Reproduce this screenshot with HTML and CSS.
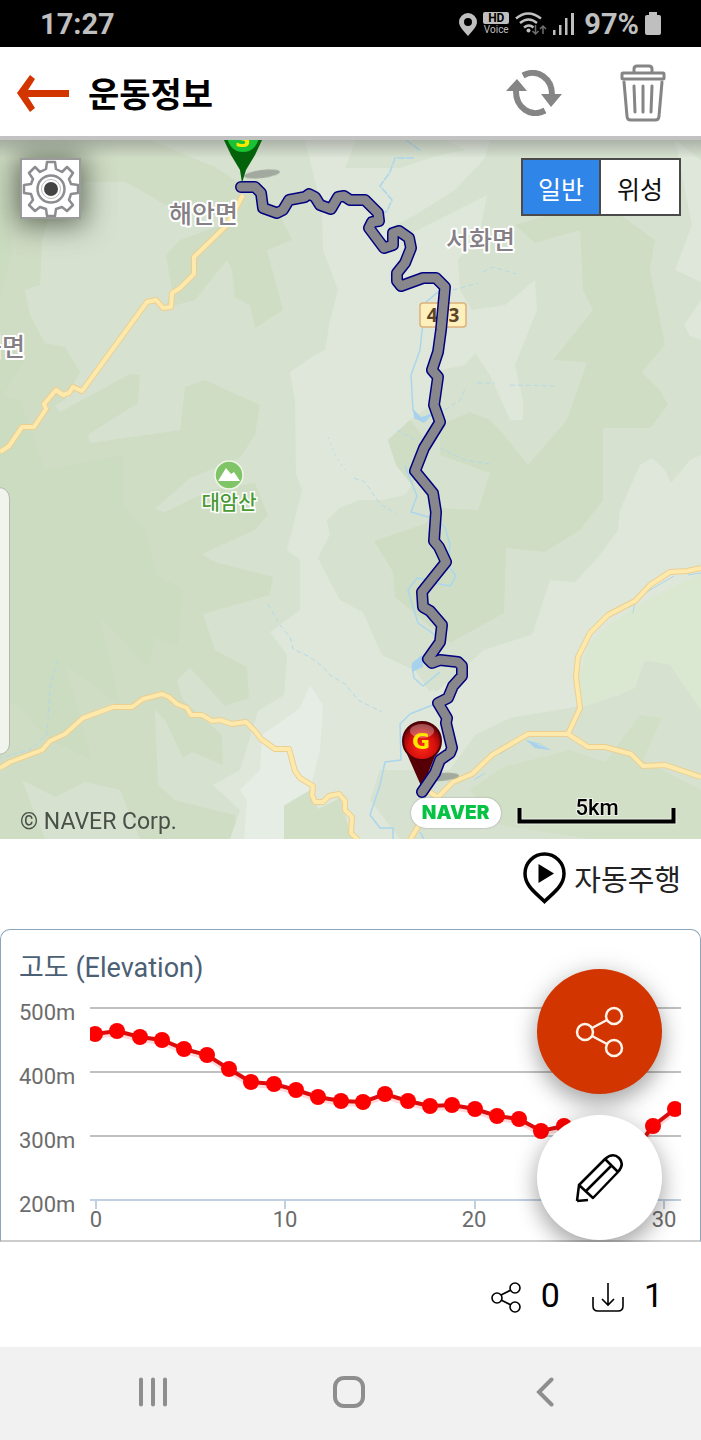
FILE: index.html
```html
<!DOCTYPE html>
<html lang="ko">
<head>
<meta charset="utf-8">
<meta name="viewport" content="width=device-width, initial-scale=1">
<title>운동정보</title>
<link rel="stylesheet" href="styles.css">
</head>
<body>
<div class="status-bar">
  <span class="status-time">17:27</span>
  <div class="status-icons">
    <svg width="18" height="24" viewBox="0 0 18 24"><path fill="#bfbfbf" fill-rule="evenodd" d="M9 1a9 9 0 0 0-9 9c0 5 5 9 9 14 4-5 9-9 9-14a9 9 0 0 0-9-9zm0 5a4 4 0 1 1 0 8 4 4 0 0 1 0-8z"/></svg>
    <span class="hd-voice"><b class="hd">HD</b><span class="voice">Voice</span></span>
    <svg width="32" height="24" viewBox="0 0 32 24" fill="none"><g stroke="#bfbfbf" stroke-width="2.4"><path d="M1 6.500q12-10 25 0M5 11q8.500-7 17 0M9 15.500q5-4 9.500 0"/></g><circle cx="13.500" cy="18.500" r="2" fill="#bfbfbf"/><path d="M20.500 13v9m-3-3 3 3 3-3M28 22v-8m-3 3 3-3 3 3" stroke="#6d6d6d" stroke-width="1.500"/></svg>
    <svg class="signal" width="21" height="22" viewBox="0 0 21 22" fill="#bfbfbf"><path d="M0 17h2.500v5H0zM6 12h2.500v10H6zM12 5h2.500v17H12zM18 0h3v22h-3z"/></svg>
    <span class="status-battery">97%</span>
    <svg width="16" height="23" viewBox="0 0 16 23"><path fill="#bfbfbf" d="M4 0h8v3h2q2 0 2 2v16q0 2-2 2H2q-2 0-2-2V5q0-2 2-2h2z"/></svg>
  </div>
</div>

<header class="app-bar">
  <button class="icon-button" type="button" aria-label="뒤로"><svg width="52" height="38" viewBox="0 0 52 38"><path fill="#d23500" d="M0 19 13 1l5 4-7 11h41v7H11l7 11-5 4z"/></svg></button>
  <h1 class="app-title">운동정보</h1>
  <button class="icon-button refresh" type="button" aria-label="새로고침"><svg width="56" height="46" viewBox="0 0 56 46"><g fill="none" stroke="#858585" stroke-width="6"><path d="M17 5.500C31-2 47 8 46 27"/><path d="M39 40.500C25 48 9 38 10 19"/></g><path fill="#858585" d="M35 24h21L45 37zM0 21h21L11 9z"/></svg></button>
  <button class="icon-button" type="button" aria-label="삭제"><svg width="46" height="58" viewBox="0 0 46 58" fill="none" stroke="#858585" stroke-width="3"><path d="M14 8V5q0-3 3-3h12q3 0 3 3v3"/><rect x="2" y="9" width="42" height="6" rx="1"/><path d="M4 18l3 34q0 4 4 4h24q4 0 4-4l3-34M14 22l1 26M23 22v26M32 22l-1 26" stroke-linecap="round"/></svg></button>
</header>

<main>
<section class="map" aria-label="지도">
  <svg class="map-canvas" viewBox="0 140 701 699">
    <defs>
      <radialGradient id="redPin" cx=".5" cy=".65" r=".65"><stop offset="0" stop-color="#ff2b1c"/><stop offset=".55" stop-color="#d40f0c"/><stop offset="1" stop-color="#560006"/></radialGradient>
      <linearGradient id="topShade" x2="0" y2="1"><stop offset="0" stop-color="#777" stop-opacity=".45"/><stop offset="1" stop-color="#777" stop-opacity="0"/></linearGradient>
      <path id="roadA" d="M0 452 9 446 22 427H34L46 409 44 404 56 390 63 395 69 393 73 387 82 391 147 302 156 300 163 308 171 307 172 293 180 288 194 274V257L227 225 243 195"/>
      <path id="roadB" d="M0 768 10 762 42 750 50 741 65 734 83 718 113 707H132L143 699 162 694 169 697 177 704 187 708 191 715H202L212 721 220 720 232 724 246 722 255 731 261 739 275 749H289L295 771 300 778 313 786 312 795 315 802H323L329 796 339 794 345 801V810L352 817 351 833 358 840"/>
      <path id="roadC" d="M410 840 420 823 438 797 453 782 472 774 492 755 528 734H568L588 747H605L631 754 643 766 665 765 701 777M568 734 580 708 576 677 578 657 590 633 608 615 635 601 650 585 670 572 687 571 701 568M422 787 440 799"/>
      <path id="track" d="M241 187H255L261 193 263 208 277 213 283 210 289 200 305 197 309 194 315 197 320 205 331 209 338 197 344 196 350 200H365L378 213 379 221 372 222 369 228 384 248 393 245V233L399 231 409 238 411 248 405 263 397 273V281L401 286 423 278H436L445 287 441 330 438 352 432 370 438 377 434 405 440 422 424 448 415 471 433 493 436 512 434 541 439 547 446 562 422 592 423 607 430 611 442 625 440 642 428 659 432 663 440 660 458 662 462 666V676L453 686 448 698 438 703 447 718 446 723 452 748 450 753 440 760 435 773 422 792"/>
    </defs>
    <rect y="140" width="701" height="699" fill="#d6e2cf"/>
    <!-- terrain -->
    <path fill="#d0ddc5" d="M0 140H150L215 167 235 180 280 215 292 240 267 250 283 310 255 328 250 305 235 298 232 270 227 260 195 300 165 308 172 290 166 255 180 240 235 220 165 205 140 190 125 182H85L50 215 42 240 40 285 25 290 30 315 45 343 65 347 80 372 65 400 55 406 60 412 130 374 140 375 138 403 88 435 90 443 180 430 185 387 205 380 260 405 255 435 240 458 190 478 155 509 165 512 210 490 255 483 268 515 255 530 202 554 215 562 273 577 270 595 203 614 215 650 247 667 249 698 225 706 190 668 177 680 183 700 222 735 223 765 192 752 183 758 165 720 155 710 158 785 175 800 235 815 238 839H140L120 790 85 782 55 797 22 780 45 839H0z"/>
    <path fill="#cbdcc1" d="M0 140 12 250 0 300zM0 340 25 360 0 400zM0 395 20 400 45 470 123 455V505L145 530 157 575 183 590 178 645 155 638 148 667 100 617 120 705 65 665 92 760 50 740 15 703 0 710z"/>
    <path fill="#dee7d9" d="M265 140H490L485 158 455 190 415 215 390 228 402 238 487 195 480 232 458 260 460 290 472 310 505 305 535 280 537 310 515 365 523 400V420H510L490 375 475 353 465 365 440 370 438 400 410 420 388 440 396 465 412 485 405 495 360 505 340 508 327 520 330 535 318 558 340 600 363 612 380 650 415 670 430 692 480 650 500 640 532 635 550 580 575 582 600 555 618 530 620 510 640 465 652 458 665 470 671 483 690 460 701 455V839H230L240 810 213 785 240 770 258 711 284 695 287 655 270 632 300 610V560L287 550 302 490 296 475 295 400 290 372 315 355 325 350 330 320 338 290 323 250 322 210 305 140z"/>
    <path fill="#d6e2cf" d="M356 140H445L465 150 440 155 400 168H345z"/>
    <path fill="#d6e2cf" d="M340 508 327 520 330 535 318 558 340 600 363 612 382 655 418 672 436 692 484 650 530 635 547 585 505 560V500H360z"/>
    <path fill="#d0ddc5" d="M515 225 535 243 580 230 583 290 593 310 553 360 587 362 567 420 528 465 500 430 490 420 470 412 440 425V455L490 473 478 510 440 508 424 524 374 541 393 572 395 597 407 607 450 643 504 613 506 548 545 552 580 530 603 500V428L650 428 668 405 660 390 642 372 665 345 650 270 655 240 600 200zM410 420 388 440 396 465 412 485 430 445z"/>
    <path fill="#dee7d9" d="M675 140 701 160V282L675 270 692 225zM701 300 684 325 690 336 701 340z"/>
    <path fill="#d6e2cf" d="M400 839 370 800 380 770 450 770 475 735 510 718 570 708 620 695 640 662 701 650V839z"/>
    <path fill="#dbe8d1" d="M701 573 652 597 608 625 588 645 577 690 578 709 635 688 645 660 670 665 701 710z"/>
    <path fill="#d1dfc6" d="M503 767 570 750 605 762 640 715 662 718 643 760 701 790V839H590L500 825 470 790zM284 839V806L310 790 318 809 340 798 352 839z"/>
    <path fill="#e5ede4" d="M310 685 323 705 320 750 310 790 284 805V839H244L247 800 240 790 260 770 262 735 300 708z"/>
    <!-- water -->
    <g fill="none" stroke="#abd6ec" stroke-width="1.500" stroke-linejoin="round">
      <path d="M406 140 421 151M414 158 395 158 390 172 380 186 392 200 387 211 376 218" stroke-dasharray="8 1"/>
      <path d="M438 292 425 303 420 350 411 375 413 410 421 420 430 414M405 466 417 496 411 512 432 518 445 527 450 545 448 565 456 576 450 586 434 583M429 580 417 578 408 590 414 610 418 623 435 635M429 660 412 666 414 678 423 686 440 672M435 704 410 714 400 724 401 760 385 762 380 785 370 815 380 828 393 828 393 839M420 832 424 839"/>
      <path d="M453 290 478 283M483 272 493 267 516 274M477 383 495 383M510 385 555 386M445 410 460 400 466 387M397 430 415 440M440 448 465 460 490 464M354 478 365 482 380 504 397 514M268 604 280 625 290 637 293 649 310 657 323 667 330 675 345 684 358 700 382 712M58 660 50 686 47 735 30 750 0 758" stroke-width="1" stroke-dasharray="5 3" opacity=".8"/>
      <path d="M527 741 540 744 550 750M474 780 485 773M500 754 510 747M674 576 650 590 635 600 633 613M688 575 701 573" stroke-width="1"/>
      <path d="M328 437 336 457 345 470" stroke-width="1" stroke-dasharray="2 4" opacity=".7"/>
    </g>
    <path fill="#a7d1ec" d="M412 663 422 655 423 667 412 672zM525 739 550 750 535 748zM413 409 421 417 433 414 424 423 414 418z"/>
    <!-- roads -->
    <g fill="none" stroke-linejoin="round">
      <g stroke="#ebcf91" stroke-width="6"><use href="#roadA"/><use href="#roadB"/><use href="#roadC"/></g>
      <g stroke="#fde9ab" stroke-width="4"><use href="#roadA"/><use href="#roadB"/><use href="#roadC"/></g>
    </g>
    <rect y="140" width="701" height="18" fill="url(#topShade)"/>
    <!-- place names -->
    <g class="place">
      <text x="169" y="223">해안면</text>
      <text x="446" y="249">서화면</text>
      <text x="-21" y="356">북면</text>
    </g>
    <g>
      <circle cx="229" cy="475" r="14" fill="#7fc466" stroke="#eef6e8" stroke-width="1.500"/>
      <path fill="#fff" d="M218 481 226 468 231 474 234 472 240 481z"/>
      <text class="peak" x="229" y="510" text-anchor="middle">대암산</text>
    </g>
    <rect x="420" y="303" width="46" height="24" rx="3" fill="#fdf0bd" stroke="#ddb178" stroke-width="1.500"/>
    <text class="road-number" x="443" y="322" text-anchor="middle">453</text>
    <!-- pins and track -->
    <g fill="#555" opacity=".4"><ellipse cx="262" cy="174" rx="18" ry="4" transform="rotate(-7 262 174)"/><ellipse cx="441" cy="777" rx="18" ry="4" transform="rotate(-5 441 777)"/></g>
    <path fill="#560006" d="M407 754 422 788 436 754z"/>
    <circle cx="422" cy="741" r="19" fill="url(#redPin)" stroke="#4d0008" stroke-width="2"/>
    <ellipse cx="422" cy="731" rx="12" ry="7" fill="#fff" opacity=".3"/>
    <text class="pin-letter" x="421" y="749" text-anchor="middle">G</text>
    <g fill="none" stroke-linejoin="round" stroke-linecap="round">
      <use href="#track" stroke="#000080" stroke-width="12"/>
      <use href="#track" stroke="#87878c" stroke-width="9"/>
    </g>
    <path fill="#04630a" d="M223 138 231 155 240 170 242 183 246 170 255 155 263 138z"/>
    <path fill="#1ac035" d="M227 138Q231 152 243 152T259 138z"/>
    <text class="pin-letter" x="243" y="147" text-anchor="middle">S</text>
    <!-- scale -->
    <path d="M519.500 808V821.500H673.500V808" fill="none" stroke="#fff" stroke-width="6" opacity=".5"/>
    <path d="M519.500 808V821.500H673.500V808" fill="none" stroke="#000" stroke-width="4"/>
    <text class="scale-text" x="597" y="815" text-anchor="middle">5km</text>
    <text class="copyright" x="20" y="829">© NAVER Corp.</text>
  </svg>
  <button class="settings" type="button" aria-label="설정"><svg width="58" height="58" viewBox="-29 -29 58 58" fill="none" stroke="#8d8d91" stroke-width="2.500" stroke-linejoin="round"><path d="M-5-20-4-27H4L5-20 11-17 16-22 22-16 18-10 20-5 27-4V4L20 5 18 11 22 16 16 22 11 18 5 20 4 27H-4L-5 20-11 18-16 22-22 16-18 11-20 5-27 4V-4L-20-5-18-10-22-16-16-22-11-17z"/><circle r="13.500"/><circle r="9.500" stroke="#bbb" stroke-width="1"/><circle r="7" fill="#444" stroke="none"/></svg></button>
  <div class="map-type" role="group" aria-label="지도 유형">
    <button class="map-type-option is-active" type="button" aria-pressed="true">일반</button>
    <button class="map-type-option" type="button" aria-pressed="false">위성</button>
  </div>
  <span class="edge-handle"></span>
  <span class="naver-badge">NAVER</span>
</section>

<div class="auto-row">
  <button class="auto-button" type="button"><svg width="43" height="52" viewBox="0 0 43 52"><path d="M21.500 2A19.500 19.500 0 0 0 2 21.500C2 34 13 41 21.500 49.500 30 41 41 34 41 21.500A19.500 19.500 0 0 0 21.500 2z" fill="#fff" stroke="#000" stroke-width="3.500"/><path d="M15.500 12v19L31 21.500z"/></svg><span class="auto-label">자동주행</span></button>
</div>

<section class="chart-card">
  <h2 class="chart-title">고도 (Elevation)</h2>
  <svg class="chart" viewBox="1 990 699 250">
    <defs><clipPath id="plot"><rect x="90" y="990" width="591" height="230"/></clipPath></defs>
    <path d="M90 1008H681M90 1072H681M90 1136H681" stroke="#c0c0c0" stroke-width="2"/>
    <path d="M90 1200H681M96 1201v8M285 1201v8M475 1201v8M664 1201v8" stroke="#c0d0e0" stroke-width="2" fill="none"/>
    <g clip-path="url(#plot)">
      <path d="M95 1036 117 1033 140 1039 162 1042 184 1051 207 1057 229 1071 251 1084 274 1086 296 1092 318 1099 341 1103 363 1104 385 1096 408 1103 430 1108 452 1107 475 1111 497 1118 519 1121 541 1133 564 1128 586 1152 608 1170 630 1158 653 1128 675 1111" fill="none" stroke="#f00" stroke-opacity=".15" stroke-width="6"/>
      <polyline class="series" points="95,1034 117,1031 140,1037 162,1040 184,1049 207,1055 229,1069 251,1082 274,1084 296,1090 318,1097 341,1101 363,1102 385,1094 408,1101 430,1106 452,1105 475,1109 497,1116 519,1119 541,1131 564,1126 586,1150 608,1168 630,1156 653,1126 675,1109"/>
    </g>
    <g class="axis-text">
      <text x="19" y="1020">500m</text><text x="19" y="1084">400m</text><text x="19" y="1148">300m</text><text x="19" y="1212">200m</text>
      <g text-anchor="middle"><text x="96" y="1227">0</text><text x="285" y="1227">10</text><text x="474" y="1227">20</text><text x="664" y="1227">30</text></g>
    </g>
  </svg>
  <div class="fabs">
    <button class="fab fab-share" type="button" aria-label="공유"><svg width="50" height="52" viewBox="0 0 50 52" fill="none" stroke="#fff4ea" stroke-width="2.500"><circle cx="10" cy="26" r="8"/><circle cx="39" cy="10" r="8"/><circle cx="39" cy="42" r="8"/><path d="M17 22 32 14M17 30 32 38"/></svg></button>
    <button class="fab fab-edit" type="button" aria-label="편집"><svg width="50" height="50" viewBox="0 0 50 50" fill="none" stroke="#000" stroke-width="2.500" stroke-linejoin="round"><path d="M2 48 4 32 30 6Q38-1 44 5T43 19L18 45 4 32M2 48 13 47M30 6 43 19M11 38 36 13"/></svg></button>
  </div>
</section>

<div class="stats">
  <span class="stat"><svg width="30" height="32" viewBox="0 0 30 32" fill="none" stroke="#000" stroke-width="1.600"><circle cx="6" cy="17" r="5"/><circle cx="24" cy="7" r="5"/><circle cx="24" cy="26" r="5"/><path d="M10 14 20 9M10 19 20 24"/></svg><span class="stat-value">0</span></span>
  <span class="stat"><svg width="32" height="32" viewBox="0 0 32 32" fill="none" stroke="#000" stroke-width="1.600"><path d="M1 16v9q0 5 5 5h20q5 0 5-5v-9M16 2v22M10 18l6 6 6-6"/></svg><span class="stat-value">1</span></span>
</div>
</main>

<nav class="system-nav" aria-label="시스템">
  <button class="nav-button" type="button" aria-label="최근 앱"><svg width="28" height="30" viewBox="0 0 28 30" stroke="#8e8e8e" stroke-width="4" stroke-linecap="round"><path d="M2 2.500v25M14 2.500v25M26 2.500v25"/></svg></button>
  <button class="nav-button" type="button" aria-label="홈"><svg width="32" height="32" viewBox="0 0 32 32"><rect x="2" y="2" width="28" height="28" rx="9" fill="none" stroke="#8e8e8e" stroke-width="4"/></svg></button>
  <button class="nav-button" type="button" aria-label="뒤로 가기"><svg width="18" height="30" viewBox="0 0 18 30"><path d="M15.500 2.500 3 15l12.500 12.500" fill="none" stroke="#8e8e8e" stroke-width="4" stroke-linecap="round"/></svg></button>
</nav>
<script src="chart.js"></script>
</body>
</html>
```
FILE: styles.css
```css
* { box-sizing: border-box; }
body {
  margin: 0;
  background: #fff;
  color: #222;
  font-family: Roboto, "Noto Sans CJK KR", sans-serif;
}
button { font: inherit; color: inherit; border: 0; background: none; padding: 0; cursor: pointer; }
svg { display: block; flex: none; }

.status-bar {
  display: flex; align-items: center; justify-content: space-between;
  height: 47px; padding: 0 40px;
  background: #000; color: #bfbfbf;
}
.status-time, .status-battery { font-size: 29px; line-height: 32px; font-weight: 700; }
.status-icons { display: flex; align-items: center; gap: 6px; }
.signal { margin-right: 4px; }
.hd-voice { display: flex; flex-direction: column; align-items: center; width: 26px; }
.hd { width: 26px; background: #bfbfbf; color: #000; border-radius: 2px; font-size: 12px; line-height: 12px; text-align: center; }
.voice { font-size: 10px; line-height: 11px; }

.app-bar {
  display: flex; align-items: center;
  height: 93px; padding: 3px 35px 0 17px;
  background: #fff; border-bottom: 4px solid #c2c2c2;
}
.app-title { margin: 0 auto 0 19px; padding-top: 3px; font-size: 34px; line-height: 44px; font-weight: 700; color: #000; }
.refresh { margin-right: 58px; }

.map { position: relative; overflow: hidden; }
.map-canvas { width: 100%; height: auto; }
.place { font-size: 25px; font-weight: 500; fill: #858085; stroke: #fff; stroke-width: 4px; stroke-linejoin: round; paint-order: stroke; }
.peak { font-size: 20px; font-weight: 500; fill: #4a9a34; stroke: #fff; stroke-width: 3px; paint-order: stroke; }
.road-number { font: 700 19px "Noto Sans", sans-serif; fill: #5b4526; }
.pin-letter { font: 700 22px "DejaVu Sans", sans-serif; fill: #ffe800; }
.scale-text { font-size: 22px; font-weight: 500; fill: #000; stroke: #eef3ea; stroke-width: 2px; paint-order: stroke; }
.copyright { font-size: 23px; fill: #4a4f48; }
.settings {
  position: absolute; left: 20px; top: 18px;
  display: grid; place-items: center;
  width: 61px; height: 61px;
  background: #fff; border: 2px solid #9b9b9b;
  box-shadow: 0 2px 28px 4px rgba(60, 70, 55, .75);
}
.map-type {
  position: absolute; right: 20px; top: 18px;
  display: flex; border: 2px solid #4a4a4a; background: #fff;
}
.map-type-option { width: 78px; height: 54px; padding-top: 2px; font-size: 25px; color: #111; }
.map-type-option.is-active { background: #2f86e8; color: #fff; border-right: 2px solid #4a4a4a; }
.edge-handle {
  position: absolute; left: -20px; top: 347px; width: 30px; height: 268px;
  background: #f0f4ed; border: 1px solid #b4b8b1; border-radius: 11px;
}
.naver-badge {
  position: absolute; left: 60%; bottom: 11px; margin-left: -10px;
  width: 90px; height: 30px; border-radius: 15px;
  background: #fff; color: #06c345; box-shadow: 0 0 2px #999;
  font: 900 19px/30px Inter, sans-serif; text-align: center;
}

.auto-row { display: flex; justify-content: flex-end; align-items: center; height: 90px; padding: 0 20px 12px 0; }
.auto-button { display: flex; align-items: center; gap: 8px; font-size: 29px; line-height: 40px; color: #222; }
.auto-label { padding-top: 5px; }

.chart-card {
  position: relative;
  border: 1px solid #8ba6ba; border-bottom: 2px solid #ccc;
  border-radius: 10px 10px 0 0;
}
.chart-title { margin: 0; padding: 20px 18px 4px; font-size: 27px; line-height: 36px; font-weight: 400; color: #4b6075; }
.chart { width: 100%; height: auto; }
.series { fill: none; stroke: #dd0c0c; stroke-width: 4px; }
.dot { fill: #f00; }
.axis-text { font-size: 22px; fill: #6c6c6c; }
.fabs { position: absolute; right: 38px; bottom: 0; display: flex; flex-direction: column; gap: 21px; }
.fab {
  display: grid; place-items: center;
  width: 125px; height: 125px; border-radius: 50%;
  box-shadow: 0 10px 22px rgba(0, 0, 0, .3), 0 0 28px rgba(0, 0, 0, .1);
}
.fab-share { background: #d23500; }
.fab-edit { background: #fff; }

.stats {
  position: relative;
  display: flex; justify-content: flex-end; align-items: center; gap: 32px;
  height: 105px; padding: 4px 38px 0 0; background: #fff;
}
.stat { display: flex; align-items: center; gap: 20px; font-size: 34px; line-height: 40px; color: #000; }
.stat-value { padding-bottom: 4px; }

.system-nav {
  display: flex; justify-content: space-between; align-items: center;
  height: 94px; padding: 0 140px 4px 137px; background: #f1f1f1;
}
.nav-button { display: grid; place-items: center; width: 32px; height: 32px; }
```
FILE: chart.js
```js
const series = document.querySelector('.series');
for (const point of Array.from(series.points)) {
  const dot = document.createElementNS('http://www.w3.org/2000/svg', 'circle');
  dot.setAttribute('class', 'dot');
  dot.setAttribute('cx', point.x);
  dot.setAttribute('cy', point.y);
  dot.setAttribute('r', 8);
  series.parentNode.append(dot);
}
```
